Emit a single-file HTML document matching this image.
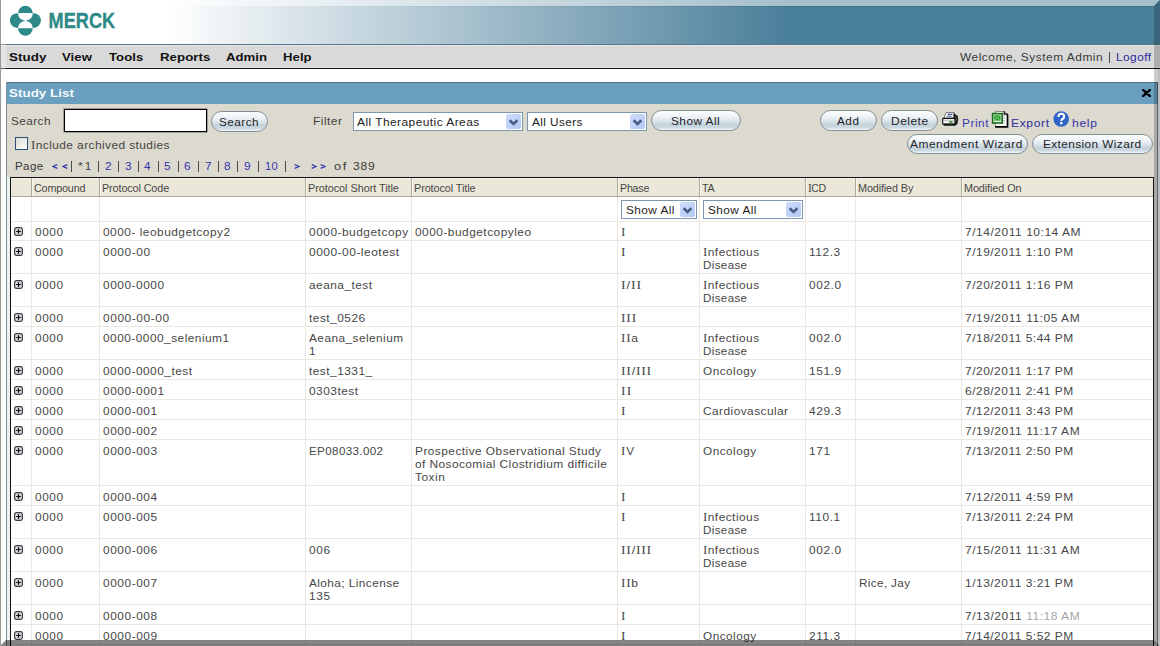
<!DOCTYPE html><html><head><meta charset="utf-8"><style>
html,body{margin:0;padding:0;}
body{width:1160px;height:646px;overflow:hidden;position:relative;background:#fff;font-family:"Liberation Sans",sans-serif;}
div{box-sizing:border-box;}
</style></head><body>
<div style="position:absolute;left:0px;top:0px;width:1160px;height:44px;background:linear-gradient(to right,#ffffff 0px,#ffffff 165px,#4a7f9a 790px,#4a7f9a 1160px);"></div>
<div style="position:absolute;left:0px;top:0px;width:1px;height:68px;background:#8a8a8a;"></div>
<svg style="position:absolute;left:0;top:0" width="130" height="44" viewBox="0 0 130 44">
<g fill="#2e8a88">
<circle cx="17.3" cy="20.6" r="7.4"/>
<circle cx="33.5" cy="20.6" r="7.4"/>
</g>
<path d="M18,13.2 A7.4,7.4 0 0 1 32.8,13.2 Z" fill="#2e8a88"/>
<path d="M18,13.2 A7.4,7.4 0 0 0 32.8,13.2 Z" fill="#ffffff"/>
<path d="M18,28.3 A7.4,7.4 0 0 1 32.8,28.3 Z" fill="#ffffff"/>
<path d="M18,28.3 A7.4,7.4 0 0 0 32.8,28.3 Z" fill="#2e8a88"/>
<text x="48.6" y="28.2" font-family="Liberation Sans" font-weight="bold" font-size="21.5" fill="#2e8a88" stroke="#2e8a88" stroke-width="0.35" textLength="66.5" lengthAdjust="spacingAndGlyphs">MERCK</text>
</svg>
<div style="position:absolute;left:1px;top:44px;width:1159px;height:1px;background:#5d7080;"></div>
<div style="position:absolute;left:1px;top:45px;width:1159px;height:23px;background:#d9d9d9;"></div>
<div style="position:absolute;left:1px;top:45px;width:1159px;height:1px;background:#e4eaee;"></div>
<div style="position:absolute;left:1px;top:67px;width:1159px;height:1px;background:#e6e6e6;"></div>
<div style="position:absolute;left:0px;top:68px;width:1160px;height:1px;background:#111111;"></div>
<div style="position:absolute;left:9.40px;top:51px;font-size:11px;line-height:13px;font-weight:bold;letter-spacing:0.044px;transform:scaleX(1.2142);transform-origin:0 0;color:#111;white-space:nowrap;">Study</div>
<div style="position:absolute;left:62.40px;top:51px;font-size:11px;line-height:13px;font-weight:bold;letter-spacing:0.055px;transform:scaleX(1.1968);transform-origin:0 0;color:#111;white-space:nowrap;">View</div>
<div style="position:absolute;left:108.60px;top:51px;font-size:11px;line-height:13px;font-weight:bold;letter-spacing:0.040px;transform:scaleX(1.1933);transform-origin:0 0;color:#111;white-space:nowrap;">Tools</div>
<div style="position:absolute;left:159.60px;top:51px;font-size:11px;line-height:13px;font-weight:bold;letter-spacing:0.028px;transform:scaleX(1.2054);transform-origin:0 0;color:#111;white-space:nowrap;">Reports</div>
<div style="position:absolute;left:225.80px;top:51px;font-size:11px;line-height:13px;font-weight:bold;letter-spacing:0.041px;transform:scaleX(1.1952);transform-origin:0 0;color:#111;white-space:nowrap;">Admin</div>
<div style="position:absolute;left:282.80px;top:51px;font-size:11px;line-height:13px;font-weight:bold;letter-spacing:0.054px;transform:scaleX(1.1914);transform-origin:0 0;color:#111;white-space:nowrap;">Help</div>
<div style="position:absolute;left:959.80px;top:51px;font-size:11px;line-height:13px;letter-spacing:0.478px;transform:scaleX(1.0836);transform-origin:0 0;color:#3a3a3a;white-space:nowrap;">Welcome, System Admin</div>
<div style="position:absolute;left:1109px;top:52px;width:1px;height:11px;background:#4a4a4a;"></div>
<div style="position:absolute;left:1115.80px;top:51px;font-size:11px;line-height:13px;letter-spacing:0.443px;transform:scaleX(1.0755);transform-origin:0 0;color:#2a2aa0;white-space:nowrap;">Logoff</div>
<div style="position:absolute;left:6px;top:82px;width:1152px;height:1px;background:#4f7389;"></div>
<div style="position:absolute;left:6px;top:82px;width:1px;height:570px;background:#7f8f99;"></div>
<div style="position:absolute;left:1157px;top:82px;width:1px;height:570px;background:#4f5f69;"></div>
<div style="position:absolute;left:7px;top:83px;width:1150px;height:21px;background:#6a9fc0;"></div>
<div style="position:absolute;left:7px;top:104px;width:1150px;height:540px;background:#dcd9cf;"></div>
<div style="position:absolute;left:9.30px;top:87px;font-size:11px;line-height:13px;font-weight:bold;letter-spacing:0.020px;transform:scaleX(1.2169);transform-origin:0 0;color:#f4faff;white-space:nowrap;">Study List</div>
<svg style="position:absolute;left:1142px;top:89px" width="9" height="8" viewBox="0 0 9 8"><path d="M1,0.8 L8,7.2 M8,0.8 L1,7.2" stroke="#000" stroke-width="2.3" stroke-linecap="round"/></svg>
<div style="position:absolute;left:10.80px;top:115px;font-size:11px;line-height:13px;letter-spacing:0.439px;transform:scaleX(1.0652);transform-origin:0 0;color:#444;white-space:nowrap;">Search</div>
<div style="position:absolute;left:64px;top:109px;width:143px;height:23px;border:1px solid #000;box-shadow:0 0 0 0.5px rgba(0,0,0,0.55);background:#fff;"></div>
<div style="position:absolute;left:211px;top:111px;width:57px;height:21px;border:1px solid #858e95;border-radius:10.5px;background:linear-gradient(to bottom,#fdfefe 0%,#eef3f6 30%,#dde6eb 50%,#c3d2db 72%,#cbd8e0 86%,#f4f7f9 100%);"></div>
<div style="position:absolute;left:219.10px;top:115.5px;font-size:11px;line-height:13px;letter-spacing:0.448px;transform:scaleX(1.0667);transform-origin:0 0;color:#1e1e2a;white-space:nowrap;">Search</div>
<div style="position:absolute;left:313.10px;top:115px;font-size:11px;line-height:13px;letter-spacing:0.416px;transform:scaleX(1.0891);transform-origin:0 0;color:#444;white-space:nowrap;">Filter</div>
<div style="position:absolute;left:353px;top:112px;width:170px;height:19px;border:1px solid #7b96ad;background:#fff;"></div>
<div style="position:absolute;left:506px;top:114px;width:15px;height:15px;border-radius:2px;background:linear-gradient(135deg,#d2dcfb 0%,#bdd0f8 60%,#b2c9f6 100%);"></div>
<svg style="position:absolute;left:506px;top:114px" width="15" height="15" viewBox="0 0 15 15"><path d="M3.6,6.2 L7.5,10 L11.4,6.2" fill="none" stroke="#4a5e84" stroke-width="2.6"/></svg>
<div style="position:absolute;left:357.30px;top:116px;font-size:11px;line-height:13px;letter-spacing:0.415px;transform:scaleX(1.0848);transform-origin:0 0;color:#222;white-space:nowrap;">All Therapeutic Areas</div>
<div style="position:absolute;left:527px;top:112px;width:120px;height:19px;border:1px solid #7b96ad;background:#fff;"></div>
<div style="position:absolute;left:630px;top:114px;width:15px;height:15px;border-radius:2px;background:linear-gradient(135deg,#d2dcfb 0%,#bdd0f8 60%,#b2c9f6 100%);"></div>
<svg style="position:absolute;left:630px;top:114px" width="15" height="15" viewBox="0 0 15 15"><path d="M3.6,6.2 L7.5,10 L11.4,6.2" fill="none" stroke="#4a5e84" stroke-width="2.6"/></svg>
<div style="position:absolute;left:531.50px;top:116px;font-size:11px;line-height:13px;letter-spacing:0.375px;transform:scaleX(1.0715);transform-origin:0 0;color:#222;white-space:nowrap;">All Users</div>
<div style="position:absolute;left:651px;top:110px;width:90px;height:21px;border:1px solid #858e95;border-radius:10.5px;background:linear-gradient(to bottom,#fdfefe 0%,#eef3f6 30%,#dde6eb 50%,#c3d2db 72%,#cbd8e0 86%,#f4f7f9 100%);"></div>
<div style="position:absolute;left:670.50px;top:114.5px;font-size:11px;line-height:13px;letter-spacing:0.435px;transform:scaleX(1.0748);transform-origin:0 0;color:#1e1e2a;white-space:nowrap;">Show All</div>
<div style="position:absolute;left:820px;top:110px;width:57px;height:21px;border:1px solid #858e95;border-radius:10.5px;background:linear-gradient(to bottom,#fdfefe 0%,#eef3f6 30%,#dde6eb 50%,#c3d2db 72%,#cbd8e0 86%,#f4f7f9 100%);"></div>
<div style="position:absolute;left:836.50px;top:114.5px;font-size:11px;line-height:13px;letter-spacing:0.554px;transform:scaleX(1.0569);transform-origin:0 0;color:#1e1e2a;white-space:nowrap;">Add</div>
<div style="position:absolute;left:881px;top:110px;width:57px;height:21px;border:1px solid #858e95;border-radius:10.5px;background:linear-gradient(to bottom,#fdfefe 0%,#eef3f6 30%,#dde6eb 50%,#c3d2db 72%,#cbd8e0 86%,#f4f7f9 100%);"></div>
<div style="position:absolute;left:890.60px;top:114.5px;font-size:11px;line-height:13px;letter-spacing:0.496px;transform:scaleX(1.0818);transform-origin:0 0;color:#1e1e2a;white-space:nowrap;">Delete</div>
<div style="position:absolute;left:907px;top:134px;width:121px;height:20px;border:1px solid #858e95;border-radius:10.0px;background:linear-gradient(to bottom,#fdfefe 0%,#eef3f6 30%,#dde6eb 50%,#c3d2db 72%,#cbd8e0 86%,#f4f7f9 100%);"></div>
<div style="position:absolute;left:910.20px;top:138.0px;font-size:11px;line-height:13px;letter-spacing:0.486px;transform:scaleX(1.0808);transform-origin:0 0;color:#1e1e2a;white-space:nowrap;">Amendment Wizard</div>
<div style="position:absolute;left:1032px;top:134px;width:121px;height:20px;border:1px solid #858e95;border-radius:10.0px;background:linear-gradient(to bottom,#fdfefe 0%,#eef3f6 30%,#dde6eb 50%,#c3d2db 72%,#cbd8e0 86%,#f4f7f9 100%);"></div>
<div style="position:absolute;left:1042.60px;top:138.0px;font-size:11px;line-height:13px;letter-spacing:0.390px;transform:scaleX(1.0725);transform-origin:0 0;color:#1e1e2a;white-space:nowrap;">Extension Wizard</div>
<svg style="position:absolute;left:942px;top:112px" width="17" height="15" viewBox="0 0 17 15">
<path d="M4.2,0.6 L12.4,0.6 L11.4,6.2 L1.8,6.2 Z" fill="#fafcff" stroke="#666" stroke-width="0.9"/>
<path d="M5.6,2.4 L10.4,2.4 M4.9,4.3 L9.6,4.3" stroke="#3b5a98" stroke-width="1.1"/>
<path d="M11.6,1 L13.6,2.4 L15.8,4 L16.2,7 L15.6,11.5 L13.8,13.6 L12,13.6 Z" fill="#1a1a1a"/>
<path d="M13.4,5.2 h1 M14.2,7.2 h1 M13.4,9.2 h1" stroke="#bbb" stroke-width="0.8"/>
<rect x="0.7" y="6.4" width="12.2" height="6" rx="0.8" fill="#f4f4f4" stroke="#111" stroke-width="1.1"/>
<path d="M1.2,8.3 L12.5,8.3" stroke="#999" stroke-width="0.6"/>
<rect x="7.2" y="9.1" width="3.4" height="1.6" fill="#2a8a2a"/>
<rect x="1.6" y="11.6" width="11.4" height="2.2" rx="0.8" fill="#111"/>
</svg>
<div style="position:absolute;left:962.00px;top:117px;font-size:11px;line-height:13px;letter-spacing:0.456px;transform:scaleX(1.0836);transform-origin:0 0;color:#3d38b0;white-space:nowrap;">Print</div>
<svg style="position:absolute;left:991px;top:110px" width="18" height="18" viewBox="0 0 18 18">
<path d="M4.5,1.5 L13.5,1.5 L16.5,4.5 L16.5,16.5 L4.5,16.5 Z" fill="#fbfffb" stroke="#8a8a8a" stroke-width="1"/>
<path d="M16.5,4.5 L16.5,16.8 L4.2,16.8" fill="none" stroke="#000" stroke-width="1.7"/>
<path d="M13.2,1.2 L13.2,4.2 L16.8,4.2" fill="none" stroke="#000" stroke-width="1.2"/>
<path d="M11.5,6 h2.5 M11.5,8.3 h2.5 M11.5,10.6 h2.5 M11.5,13 h2.5" stroke="#b0b0b0" stroke-width="1"/>
<rect x="1.6" y="3.6" width="9.6" height="9.4" fill="#d8f6d8" stroke="#1b6b1b" stroke-width="1.6"/>
<rect x="3.3" y="5.3" width="6.2" height="5.2" fill="#1d7d24"/>
<path d="M3.8,5.8 L9,10 M9,5.8 L3.8,10" stroke="#5fd05f" stroke-width="1.1"/>
</svg>
<div style="position:absolute;left:1011.30px;top:117px;font-size:11px;line-height:13px;letter-spacing:0.575px;transform:scaleX(1.0961);transform-origin:0 0;color:#302c98;white-space:nowrap;">Export</div>
<svg style="position:absolute;left:1053px;top:111px" width="17" height="16" viewBox="0 0 17 16">
<circle cx="8.2" cy="8" r="7.8" fill="#2f63c8"/>
<path d="M5.4,6 Q5.4,2.8 8.3,2.8 Q11.2,2.8 11.2,5.5 Q11.2,7.2 9.3,8 Q8.4,8.5 8.4,10" fill="none" stroke="#fff" stroke-width="2"/>
<rect x="7.2" y="11" width="2.3" height="2.3" fill="#fff"/>
</svg>
<div style="position:absolute;left:1072.10px;top:117px;font-size:11px;line-height:13px;letter-spacing:0.638px;transform:scaleX(1.0962);transform-origin:0 0;color:#3530a4;white-space:nowrap;">help</div>
<div style="position:absolute;left:15px;top:137px;width:13px;height:13px;border:1px solid #2a4f78;background:linear-gradient(135deg,#dcdcd6 0%,#f4f4f0 70%,#ffffff 100%);"></div>
<div style="position:absolute;left:31.00px;top:139px;font-size:11px;line-height:13px;letter-spacing:0.394px;transform:scaleX(1.0817);transform-origin:0 0;color:#444;white-space:nowrap;"><span style="font-family:'Liberation Serif',serif;font-size:12px">I</span>nclude archived studies</div>
<div style="position:absolute;left:15.00px;top:160px;font-size:11px;line-height:13px;letter-spacing:0.399px;transform:scaleX(1.0469);transform-origin:0 0;color:#3a3a3a;white-space:nowrap;">Page</div>
<svg style="position:absolute;left:52px;top:164px" width="6" height="5" viewBox="0 0 6 5"><path d="M5.3,0.6 L0.8,2.5 L5.3,4.4" fill="none" stroke="#3434b0" stroke-width="1.25"/></svg>
<svg style="position:absolute;left:61.5px;top:164px" width="6" height="5" viewBox="0 0 6 5"><path d="M5.3,0.6 L0.8,2.5 L5.3,4.4" fill="none" stroke="#3434b0" stroke-width="1.25"/></svg>
<div style="position:absolute;left:71px;top:161px;width:1px;height:11px;background:#4a4a4a;"></div>
<div style="position:absolute;left:98px;top:161px;width:1px;height:11px;background:#4a4a4a;"></div>
<div style="position:absolute;left:118px;top:161px;width:1px;height:11px;background:#4a4a4a;"></div>
<div style="position:absolute;left:138px;top:161px;width:1px;height:11px;background:#4a4a4a;"></div>
<div style="position:absolute;left:158px;top:161px;width:1px;height:11px;background:#4a4a4a;"></div>
<div style="position:absolute;left:178px;top:161px;width:1px;height:11px;background:#4a4a4a;"></div>
<div style="position:absolute;left:198px;top:161px;width:1px;height:11px;background:#4a4a4a;"></div>
<div style="position:absolute;left:218px;top:161px;width:1px;height:11px;background:#4a4a4a;"></div>
<div style="position:absolute;left:237px;top:161px;width:1px;height:11px;background:#4a4a4a;"></div>
<div style="position:absolute;left:258px;top:161px;width:1px;height:11px;background:#4a4a4a;"></div>
<div style="position:absolute;left:285px;top:161px;width:1px;height:11px;background:#4a4a4a;"></div>
<div style="position:absolute;left:77.80px;top:160px;font-size:11px;line-height:13px;letter-spacing:0.000px;transform:scaleX(1.2008);transform-origin:0 0;color:#3a3a3a;white-space:nowrap;font-size:10px;">*</div>
<div style="position:absolute;left:85.40px;top:160px;font-size:11px;line-height:13px;letter-spacing:0.000px;transform:scaleX(0.9904);transform-origin:0 0;color:#3a3a3a;white-space:nowrap;">1</div>
<div style="position:absolute;left:104.60px;top:160px;font-size:11px;line-height:13px;letter-spacing:0.000px;transform:scaleX(1.0721);transform-origin:0 0;color:#3434b0;white-space:nowrap;">2</div>
<div style="position:absolute;left:124.50px;top:160px;font-size:11px;line-height:13px;letter-spacing:0.000px;transform:scaleX(1.0721);transform-origin:0 0;color:#3434b0;white-space:nowrap;">3</div>
<div style="position:absolute;left:144.40px;top:160px;font-size:11px;line-height:13px;letter-spacing:0.000px;transform:scaleX(1.0721);transform-origin:0 0;color:#3434b0;white-space:nowrap;">4</div>
<div style="position:absolute;left:164.20px;top:160px;font-size:11px;line-height:13px;letter-spacing:0.000px;transform:scaleX(1.0721);transform-origin:0 0;color:#3434b0;white-space:nowrap;">5</div>
<div style="position:absolute;left:184.10px;top:160px;font-size:11px;line-height:13px;letter-spacing:0.000px;transform:scaleX(1.0721);transform-origin:0 0;color:#3434b0;white-space:nowrap;">6</div>
<div style="position:absolute;left:204.50px;top:160px;font-size:11px;line-height:13px;letter-spacing:0.000px;transform:scaleX(1.0721);transform-origin:0 0;color:#3434b0;white-space:nowrap;">7</div>
<div style="position:absolute;left:224.30px;top:160px;font-size:11px;line-height:13px;letter-spacing:0.000px;transform:scaleX(1.0721);transform-origin:0 0;color:#3434b0;white-space:nowrap;">8</div>
<div style="position:absolute;left:244.20px;top:160px;font-size:11px;line-height:13px;letter-spacing:0.000px;transform:scaleX(1.0721);transform-origin:0 0;color:#3434b0;white-space:nowrap;">9</div>
<div style="position:absolute;left:265.40px;top:160px;font-size:11px;line-height:13px;letter-spacing:0.247px;transform:scaleX(1.0190);transform-origin:0 0;color:#3434b0;white-space:nowrap;">10</div>
<svg style="position:absolute;left:294px;top:164px" width="6" height="5" viewBox="0 0 6 5"><path d="M0.7,0.6 L5.2,2.5 L0.7,4.4" fill="none" stroke="#3434b0" stroke-width="1.25"/></svg>
<svg style="position:absolute;left:310.5px;top:164px" width="6" height="5" viewBox="0 0 6 5"><path d="M0.7,0.6 L5.2,2.5 L0.7,4.4" fill="none" stroke="#3434b0" stroke-width="1.25"/></svg>
<svg style="position:absolute;left:319.5px;top:164px" width="6" height="5" viewBox="0 0 6 5"><path d="M0.7,0.6 L5.2,2.5 L0.7,4.4" fill="none" stroke="#3434b0" stroke-width="1.25"/></svg>
<div style="position:absolute;left:334.30px;top:160px;font-size:11px;line-height:13px;letter-spacing:1.440px;transform:scaleX(1.1649);transform-origin:0 0;color:#3a3a3a;white-space:nowrap;">of</div>
<div style="position:absolute;left:353.30px;top:160px;font-size:11px;line-height:13px;letter-spacing:0.809px;transform:scaleX(1.0912);transform-origin:0 0;color:#3a3a3a;white-space:nowrap;">389</div>
<div style="position:absolute;left:7px;top:177px;width:3px;height:470px;background:#eef1f2;"></div>
<div style="position:absolute;left:10px;top:177px;width:1144px;height:470px;background:#ffffff;"></div>
<div style="position:absolute;left:10px;top:178px;width:1143px;height:18px;background:#ebe8d9;"></div>
<div style="position:absolute;left:10px;top:178px;width:1143px;height:1px;background:#f7f6ee;"></div>
<div style="position:absolute;left:10px;top:177px;width:1144px;height:1px;background:#111111;"></div>
<div style="position:absolute;left:10px;top:196px;width:1143px;height:1px;background:#aca99a;"></div>
<div style="position:absolute;left:31px;top:178px;width:1px;height:18px;background:#aca99a;"></div>
<div style="position:absolute;left:32px;top:179px;width:1px;height:17px;background:#f8f7f0;"></div>
<div style="position:absolute;left:99px;top:178px;width:1px;height:18px;background:#aca99a;"></div>
<div style="position:absolute;left:100px;top:179px;width:1px;height:17px;background:#f8f7f0;"></div>
<div style="position:absolute;left:305px;top:178px;width:1px;height:18px;background:#aca99a;"></div>
<div style="position:absolute;left:306px;top:179px;width:1px;height:17px;background:#f8f7f0;"></div>
<div style="position:absolute;left:411px;top:178px;width:1px;height:18px;background:#aca99a;"></div>
<div style="position:absolute;left:412px;top:179px;width:1px;height:17px;background:#f8f7f0;"></div>
<div style="position:absolute;left:617px;top:178px;width:1px;height:18px;background:#aca99a;"></div>
<div style="position:absolute;left:618px;top:179px;width:1px;height:17px;background:#f8f7f0;"></div>
<div style="position:absolute;left:699px;top:178px;width:1px;height:18px;background:#aca99a;"></div>
<div style="position:absolute;left:700px;top:179px;width:1px;height:17px;background:#f8f7f0;"></div>
<div style="position:absolute;left:805px;top:178px;width:1px;height:18px;background:#aca99a;"></div>
<div style="position:absolute;left:806px;top:179px;width:1px;height:17px;background:#f8f7f0;"></div>
<div style="position:absolute;left:855px;top:178px;width:1px;height:18px;background:#aca99a;"></div>
<div style="position:absolute;left:856px;top:179px;width:1px;height:17px;background:#f8f7f0;"></div>
<div style="position:absolute;left:961px;top:178px;width:1px;height:18px;background:#aca99a;"></div>
<div style="position:absolute;left:962px;top:179px;width:1px;height:17px;background:#f8f7f0;"></div>
<div style="position:absolute;left:10px;top:177px;width:1px;height:470px;background:#111111;"></div>
<div style="position:absolute;left:1153px;top:177px;width:1px;height:470px;background:#111111;"></div>
<div style="position:absolute;left:33.50px;top:182px;font-size:11px;line-height:13px;letter-spacing:-0.172px;transform:scaleX(0.9785);transform-origin:0 0;color:#474747;white-space:nowrap;">Compound</div>
<div style="position:absolute;left:101.60px;top:182px;font-size:11px;line-height:13px;letter-spacing:-0.108px;transform:scaleX(0.9820);transform-origin:0 0;color:#474747;white-space:nowrap;">Protocol Code</div>
<div style="position:absolute;left:307.60px;top:182px;font-size:11px;line-height:13px;letter-spacing:-0.055px;transform:scaleX(0.9891);transform-origin:0 0;color:#474747;white-space:nowrap;">Protocol Short Title</div>
<div style="position:absolute;left:413.70px;top:182px;font-size:11px;line-height:13px;letter-spacing:-0.079px;transform:scaleX(0.9845);transform-origin:0 0;color:#474747;white-space:nowrap;">Protocol Title</div>
<div style="position:absolute;left:619.60px;top:182px;font-size:11px;line-height:13px;letter-spacing:-0.238px;transform:scaleX(0.9713);transform-origin:0 0;color:#474747;white-space:nowrap;">Phase</div>
<div style="position:absolute;left:701.80px;top:182px;font-size:11px;line-height:13px;letter-spacing:-0.360px;transform:scaleX(0.9767);transform-origin:0 0;color:#474747;white-space:nowrap;">TA</div>
<div style="position:absolute;left:807.90px;top:182px;font-size:11px;line-height:13px;letter-spacing:-0.519px;transform:scaleX(0.9526);transform-origin:0 0;color:#474747;white-space:nowrap;"><span style="font-family:'Liberation Serif',serif;font-size:12px">I</span>CD</div>
<div style="position:absolute;left:857.80px;top:182px;font-size:11px;line-height:13px;letter-spacing:-0.113px;transform:scaleX(0.9811);transform-origin:0 0;color:#474747;white-space:nowrap;">Modified By</div>
<div style="position:absolute;left:963.70px;top:182px;font-size:11px;line-height:13px;letter-spacing:-0.093px;transform:scaleX(0.9848);transform-origin:0 0;color:#474747;white-space:nowrap;">Modified On</div>
<div style="position:absolute;left:11px;top:221px;width:1142px;height:1px;background:#e9e8e1;"></div>
<div style="position:absolute;left:11px;top:240px;width:1142px;height:1px;background:#e9e8e1;"></div>
<div style="position:absolute;left:11px;top:273px;width:1142px;height:1px;background:#e9e8e1;"></div>
<div style="position:absolute;left:11px;top:306px;width:1142px;height:1px;background:#e9e8e1;"></div>
<div style="position:absolute;left:11px;top:326px;width:1142px;height:1px;background:#e9e8e1;"></div>
<div style="position:absolute;left:11px;top:359px;width:1142px;height:1px;background:#e9e8e1;"></div>
<div style="position:absolute;left:11px;top:379px;width:1142px;height:1px;background:#e9e8e1;"></div>
<div style="position:absolute;left:11px;top:399px;width:1142px;height:1px;background:#e9e8e1;"></div>
<div style="position:absolute;left:11px;top:419px;width:1142px;height:1px;background:#e9e8e1;"></div>
<div style="position:absolute;left:11px;top:439px;width:1142px;height:1px;background:#e9e8e1;"></div>
<div style="position:absolute;left:11px;top:485px;width:1142px;height:1px;background:#e9e8e1;"></div>
<div style="position:absolute;left:11px;top:505px;width:1142px;height:1px;background:#e9e8e1;"></div>
<div style="position:absolute;left:11px;top:538px;width:1142px;height:1px;background:#e9e8e1;"></div>
<div style="position:absolute;left:11px;top:571px;width:1142px;height:1px;background:#e9e8e1;"></div>
<div style="position:absolute;left:11px;top:604px;width:1142px;height:1px;background:#e9e8e1;"></div>
<div style="position:absolute;left:11px;top:624px;width:1142px;height:1px;background:#e9e8e1;"></div>
<div style="position:absolute;left:11px;top:644px;width:1142px;height:1px;background:#e9e8e1;"></div>
<div style="position:absolute;left:31px;top:197px;width:1px;height:450px;background:#e9e8e1;"></div>
<div style="position:absolute;left:99px;top:197px;width:1px;height:450px;background:#e9e8e1;"></div>
<div style="position:absolute;left:305px;top:197px;width:1px;height:450px;background:#e9e8e1;"></div>
<div style="position:absolute;left:411px;top:197px;width:1px;height:450px;background:#e9e8e1;"></div>
<div style="position:absolute;left:617px;top:197px;width:1px;height:450px;background:#e9e8e1;"></div>
<div style="position:absolute;left:699px;top:197px;width:1px;height:450px;background:#e9e8e1;"></div>
<div style="position:absolute;left:805px;top:197px;width:1px;height:450px;background:#e9e8e1;"></div>
<div style="position:absolute;left:855px;top:197px;width:1px;height:450px;background:#e9e8e1;"></div>
<div style="position:absolute;left:961px;top:197px;width:1px;height:450px;background:#e9e8e1;"></div>
<div style="position:absolute;left:621px;top:200px;width:76px;height:19px;border:1px solid #7b96ad;background:#fff;"></div>
<div style="position:absolute;left:680px;top:202px;width:15px;height:15px;border-radius:2px;background:linear-gradient(135deg,#d2dcfb 0%,#bdd0f8 60%,#b2c9f6 100%);"></div>
<svg style="position:absolute;left:680px;top:202px" width="15" height="15" viewBox="0 0 15 15"><path d="M3.6,6.2 L7.5,10 L11.4,6.2" fill="none" stroke="#4a5e84" stroke-width="2.6"/></svg>
<div style="position:absolute;left:625.60px;top:204px;font-size:11px;line-height:13px;letter-spacing:0.423px;transform:scaleX(1.0725);transform-origin:0 0;color:#222;white-space:nowrap;">Show All</div>
<div style="position:absolute;left:703px;top:200px;width:100px;height:19px;border:1px solid #7b96ad;background:#fff;"></div>
<div style="position:absolute;left:786px;top:202px;width:15px;height:15px;border-radius:2px;background:linear-gradient(135deg,#d2dcfb 0%,#bdd0f8 60%,#b2c9f6 100%);"></div>
<svg style="position:absolute;left:786px;top:202px" width="15" height="15" viewBox="0 0 15 15"><path d="M3.6,6.2 L7.5,10 L11.4,6.2" fill="none" stroke="#4a5e84" stroke-width="2.6"/></svg>
<div style="position:absolute;left:707.60px;top:204px;font-size:11px;line-height:13px;letter-spacing:0.423px;transform:scaleX(1.0725);transform-origin:0 0;color:#222;white-space:nowrap;">Show All</div>
<svg style="position:absolute;left:14px;top:227px" width="9" height="9" viewBox="0 0 9 9"><rect x="0.6" y="0.6" width="7.8" height="7.8" rx="1.8" fill="#d4d9de" stroke="#3c3c3c" stroke-width="1.2"/><path d="M2.2,4.5 L6.8,4.5 M4.5,2.2 L4.5,6.8" stroke="#000" stroke-width="1.2"/></svg>
<div style="position:absolute;left:35.40px;top:226px;font-size:11px;line-height:13px;letter-spacing:0.571px;transform:scaleX(1.0721);transform-origin:0 0;color:#474747;white-space:nowrap;">0000</div>
<div style="position:absolute;left:103.40px;top:226px;font-size:11px;line-height:13px;letter-spacing:0.445px;transform:scaleX(1.0833);transform-origin:0 0;color:#474747;white-space:nowrap;">0000- leobudgetcopy2</div>
<div style="position:absolute;left:309.40px;top:226px;font-size:11px;line-height:13px;letter-spacing:0.467px;transform:scaleX(1.0823);transform-origin:0 0;color:#474747;white-space:nowrap;">0000-budgetcopy</div>
<div style="position:absolute;left:415.40px;top:226px;font-size:11px;line-height:13px;letter-spacing:0.448px;transform:scaleX(1.0818);transform-origin:0 0;color:#474747;white-space:nowrap;">0000-budgetcopyleo</div>
<div style="position:absolute;left:621.40px;top:226px;font-size:11px;line-height:13px;letter-spacing:0.000px;transform:scaleX(1.1256);transform-origin:0 0;color:#474747;white-space:nowrap;"><span style="font-family:'Liberation Serif',serif;font-size:12px">I</span></div>
<div style="position:absolute;left:965.40px;top:226px;font-size:11px;line-height:13px;letter-spacing:0.488px;transform:scaleX(1.0905);transform-origin:0 0;color:#474747;white-space:nowrap;">7/14/2011 10:14 AM</div>
<svg style="position:absolute;left:14px;top:247px" width="9" height="9" viewBox="0 0 9 9"><rect x="0.6" y="0.6" width="7.8" height="7.8" rx="1.8" fill="#d4d9de" stroke="#3c3c3c" stroke-width="1.2"/><path d="M2.2,4.5 L6.8,4.5 M4.5,2.2 L4.5,6.8" stroke="#000" stroke-width="1.2"/></svg>
<div style="position:absolute;left:35.40px;top:246px;font-size:11px;line-height:13px;letter-spacing:0.571px;transform:scaleX(1.0721);transform-origin:0 0;color:#474747;white-space:nowrap;">0000</div>
<div style="position:absolute;left:103.40px;top:246px;font-size:11px;line-height:13px;letter-spacing:0.523px;transform:scaleX(1.0821);transform-origin:0 0;color:#474747;white-space:nowrap;">0000-00</div>
<div style="position:absolute;left:309.40px;top:246px;font-size:11px;line-height:13px;letter-spacing:0.451px;transform:scaleX(1.0887);transform-origin:0 0;color:#474747;white-space:nowrap;">0000-00-leotest</div>
<div style="position:absolute;left:621.40px;top:246px;font-size:11px;line-height:13px;letter-spacing:0.000px;transform:scaleX(1.1256);transform-origin:0 0;color:#474747;white-space:nowrap;"><span style="font-family:'Liberation Serif',serif;font-size:12px">I</span></div>
<div style="position:absolute;left:703.40px;top:246px;font-size:11px;line-height:13px;letter-spacing:0.418px;transform:scaleX(1.0831);transform-origin:0 0;color:#474747;white-space:nowrap;"><span style="font-family:'Liberation Serif',serif;font-size:12px">I</span>nfectious</div>
<div style="position:absolute;left:703.40px;top:259px;font-size:11px;line-height:13px;letter-spacing:0.345px;transform:scaleX(1.0536);transform-origin:0 0;color:#474747;white-space:nowrap;">Disease</div>
<div style="position:absolute;left:809.40px;top:246px;font-size:11px;line-height:13px;letter-spacing:0.536px;transform:scaleX(1.0813);transform-origin:0 0;color:#474747;white-space:nowrap;">112.3</div>
<div style="position:absolute;left:965.40px;top:246px;font-size:11px;line-height:13px;letter-spacing:0.466px;transform:scaleX(1.0863);transform-origin:0 0;color:#474747;white-space:nowrap;">7/19/2011 1:10 PM</div>
<svg style="position:absolute;left:14px;top:280px" width="9" height="9" viewBox="0 0 9 9"><rect x="0.6" y="0.6" width="7.8" height="7.8" rx="1.8" fill="#d4d9de" stroke="#3c3c3c" stroke-width="1.2"/><path d="M2.2,4.5 L6.8,4.5 M4.5,2.2 L4.5,6.8" stroke="#000" stroke-width="1.2"/></svg>
<div style="position:absolute;left:35.40px;top:279px;font-size:11px;line-height:13px;letter-spacing:0.571px;transform:scaleX(1.0721);transform-origin:0 0;color:#474747;white-space:nowrap;">0000</div>
<div style="position:absolute;left:103.40px;top:279px;font-size:11px;line-height:13px;letter-spacing:0.495px;transform:scaleX(1.0798);transform-origin:0 0;color:#474747;white-space:nowrap;">0000-0000</div>
<div style="position:absolute;left:309.40px;top:279px;font-size:11px;line-height:13px;letter-spacing:0.449px;transform:scaleX(1.0787);transform-origin:0 0;color:#474747;white-space:nowrap;">aeana_test</div>
<div style="position:absolute;left:621.40px;top:279px;font-size:11px;line-height:13px;letter-spacing:0.756px;transform:scaleX(1.1647);transform-origin:0 0;color:#474747;white-space:nowrap;"><span style="font-family:'Liberation Serif',serif;font-size:12px">I</span>/<span style="font-family:'Liberation Serif',serif;font-size:12px">I</span><span style="font-family:'Liberation Serif',serif;font-size:12px">I</span></div>
<div style="position:absolute;left:703.40px;top:279px;font-size:11px;line-height:13px;letter-spacing:0.418px;transform:scaleX(1.0831);transform-origin:0 0;color:#474747;white-space:nowrap;"><span style="font-family:'Liberation Serif',serif;font-size:12px">I</span>nfectious</div>
<div style="position:absolute;left:703.40px;top:292px;font-size:11px;line-height:13px;letter-spacing:0.345px;transform:scaleX(1.0536);transform-origin:0 0;color:#474747;white-space:nowrap;">Disease</div>
<div style="position:absolute;left:809.40px;top:279px;font-size:11px;line-height:13px;letter-spacing:0.536px;transform:scaleX(1.0813);transform-origin:0 0;color:#474747;white-space:nowrap;">002.0</div>
<div style="position:absolute;left:965.40px;top:279px;font-size:11px;line-height:13px;letter-spacing:0.466px;transform:scaleX(1.0863);transform-origin:0 0;color:#474747;white-space:nowrap;">7/20/2011 1:16 PM</div>
<svg style="position:absolute;left:14px;top:313px" width="9" height="9" viewBox="0 0 9 9"><rect x="0.6" y="0.6" width="7.8" height="7.8" rx="1.8" fill="#d4d9de" stroke="#3c3c3c" stroke-width="1.2"/><path d="M2.2,4.5 L6.8,4.5 M4.5,2.2 L4.5,6.8" stroke="#000" stroke-width="1.2"/></svg>
<div style="position:absolute;left:35.40px;top:312px;font-size:11px;line-height:13px;letter-spacing:0.571px;transform:scaleX(1.0721);transform-origin:0 0;color:#474747;white-space:nowrap;">0000</div>
<div style="position:absolute;left:103.40px;top:312px;font-size:11px;line-height:13px;letter-spacing:0.506px;transform:scaleX(1.0865);transform-origin:0 0;color:#474747;white-space:nowrap;">0000-00-00</div>
<div style="position:absolute;left:309.40px;top:312px;font-size:11px;line-height:13px;letter-spacing:0.454px;transform:scaleX(1.0795);transform-origin:0 0;color:#474747;white-space:nowrap;">test_0526</div>
<div style="position:absolute;left:621.40px;top:312px;font-size:11px;line-height:13px;letter-spacing:0.725px;transform:scaleX(1.1256);transform-origin:0 0;color:#474747;white-space:nowrap;"><span style="font-family:'Liberation Serif',serif;font-size:12px">I</span><span style="font-family:'Liberation Serif',serif;font-size:12px">I</span><span style="font-family:'Liberation Serif',serif;font-size:12px">I</span></div>
<div style="position:absolute;left:965.40px;top:312px;font-size:11px;line-height:13px;letter-spacing:0.488px;transform:scaleX(1.0905);transform-origin:0 0;color:#474747;white-space:nowrap;">7/19/2011 11:05 AM</div>
<svg style="position:absolute;left:14px;top:333px" width="9" height="9" viewBox="0 0 9 9"><rect x="0.6" y="0.6" width="7.8" height="7.8" rx="1.8" fill="#d4d9de" stroke="#3c3c3c" stroke-width="1.2"/><path d="M2.2,4.5 L6.8,4.5 M4.5,2.2 L4.5,6.8" stroke="#000" stroke-width="1.2"/></svg>
<div style="position:absolute;left:35.40px;top:332px;font-size:11px;line-height:13px;letter-spacing:0.571px;transform:scaleX(1.0721);transform-origin:0 0;color:#474747;white-space:nowrap;">0000</div>
<div style="position:absolute;left:103.40px;top:332px;font-size:11px;line-height:13px;letter-spacing:0.445px;transform:scaleX(1.0787);transform-origin:0 0;color:#474747;white-space:nowrap;">0000-0000_selenium1</div>
<div style="position:absolute;left:309.40px;top:332px;font-size:11px;line-height:13px;letter-spacing:0.437px;transform:scaleX(1.0735);transform-origin:0 0;color:#474747;white-space:nowrap;">Aeana_selenium</div>
<div style="position:absolute;left:309.40px;top:345px;font-size:11px;line-height:13px;letter-spacing:0.000px;transform:scaleX(1.0721);transform-origin:0 0;color:#474747;white-space:nowrap;">1</div>
<div style="position:absolute;left:621.40px;top:332px;font-size:11px;line-height:13px;letter-spacing:0.702px;transform:scaleX(1.1024);transform-origin:0 0;color:#474747;white-space:nowrap;"><span style="font-family:'Liberation Serif',serif;font-size:12px">I</span><span style="font-family:'Liberation Serif',serif;font-size:12px">I</span>a</div>
<div style="position:absolute;left:703.40px;top:332px;font-size:11px;line-height:13px;letter-spacing:0.418px;transform:scaleX(1.0831);transform-origin:0 0;color:#474747;white-space:nowrap;"><span style="font-family:'Liberation Serif',serif;font-size:12px">I</span>nfectious</div>
<div style="position:absolute;left:703.40px;top:345px;font-size:11px;line-height:13px;letter-spacing:0.345px;transform:scaleX(1.0536);transform-origin:0 0;color:#474747;white-space:nowrap;">Disease</div>
<div style="position:absolute;left:809.40px;top:332px;font-size:11px;line-height:13px;letter-spacing:0.536px;transform:scaleX(1.0813);transform-origin:0 0;color:#474747;white-space:nowrap;">002.0</div>
<div style="position:absolute;left:965.40px;top:332px;font-size:11px;line-height:13px;letter-spacing:0.466px;transform:scaleX(1.0863);transform-origin:0 0;color:#474747;white-space:nowrap;">7/18/2011 5:44 PM</div>
<svg style="position:absolute;left:14px;top:366px" width="9" height="9" viewBox="0 0 9 9"><rect x="0.6" y="0.6" width="7.8" height="7.8" rx="1.8" fill="#d4d9de" stroke="#3c3c3c" stroke-width="1.2"/><path d="M2.2,4.5 L6.8,4.5 M4.5,2.2 L4.5,6.8" stroke="#000" stroke-width="1.2"/></svg>
<div style="position:absolute;left:35.40px;top:365px;font-size:11px;line-height:13px;letter-spacing:0.571px;transform:scaleX(1.0721);transform-origin:0 0;color:#474747;white-space:nowrap;">0000</div>
<div style="position:absolute;left:103.40px;top:365px;font-size:11px;line-height:13px;letter-spacing:0.452px;transform:scaleX(1.0821);transform-origin:0 0;color:#474747;white-space:nowrap;">0000-0000_test</div>
<div style="position:absolute;left:309.40px;top:365px;font-size:11px;line-height:13px;letter-spacing:0.449px;transform:scaleX(1.0787);transform-origin:0 0;color:#474747;white-space:nowrap;">test_1331_</div>
<div style="position:absolute;left:621.40px;top:365px;font-size:11px;line-height:13px;letter-spacing:0.631px;transform:scaleX(1.1511);transform-origin:0 0;color:#474747;white-space:nowrap;"><span style="font-family:'Liberation Serif',serif;font-size:12px">I</span><span style="font-family:'Liberation Serif',serif;font-size:12px">I</span>/<span style="font-family:'Liberation Serif',serif;font-size:12px">I</span><span style="font-family:'Liberation Serif',serif;font-size:12px">I</span><span style="font-family:'Liberation Serif',serif;font-size:12px">I</span></div>
<div style="position:absolute;left:703.40px;top:365px;font-size:11px;line-height:13px;letter-spacing:0.445px;transform:scaleX(1.0703);transform-origin:0 0;color:#474747;white-space:nowrap;">Oncology</div>
<div style="position:absolute;left:809.40px;top:365px;font-size:11px;line-height:13px;letter-spacing:0.536px;transform:scaleX(1.0813);transform-origin:0 0;color:#474747;white-space:nowrap;">151.9</div>
<div style="position:absolute;left:965.40px;top:365px;font-size:11px;line-height:13px;letter-spacing:0.466px;transform:scaleX(1.0863);transform-origin:0 0;color:#474747;white-space:nowrap;">7/20/2011 1:17 PM</div>
<svg style="position:absolute;left:14px;top:386px" width="9" height="9" viewBox="0 0 9 9"><rect x="0.6" y="0.6" width="7.8" height="7.8" rx="1.8" fill="#d4d9de" stroke="#3c3c3c" stroke-width="1.2"/><path d="M2.2,4.5 L6.8,4.5 M4.5,2.2 L4.5,6.8" stroke="#000" stroke-width="1.2"/></svg>
<div style="position:absolute;left:35.40px;top:385px;font-size:11px;line-height:13px;letter-spacing:0.571px;transform:scaleX(1.0721);transform-origin:0 0;color:#474747;white-space:nowrap;">0000</div>
<div style="position:absolute;left:103.40px;top:385px;font-size:11px;line-height:13px;letter-spacing:0.495px;transform:scaleX(1.0798);transform-origin:0 0;color:#474747;white-space:nowrap;">0000-0001</div>
<div style="position:absolute;left:309.40px;top:385px;font-size:11px;line-height:13px;letter-spacing:0.460px;transform:scaleX(1.0806);transform-origin:0 0;color:#474747;white-space:nowrap;">0303test</div>
<div style="position:absolute;left:621.40px;top:385px;font-size:11px;line-height:13px;letter-spacing:1.003px;transform:scaleX(1.1256);transform-origin:0 0;color:#474747;white-space:nowrap;"><span style="font-family:'Liberation Serif',serif;font-size:12px">I</span><span style="font-family:'Liberation Serif',serif;font-size:12px">I</span></div>
<div style="position:absolute;left:965.40px;top:385px;font-size:11px;line-height:13px;letter-spacing:0.466px;transform:scaleX(1.0863);transform-origin:0 0;color:#474747;white-space:nowrap;">6/28/2011 2:41 PM</div>
<svg style="position:absolute;left:14px;top:406px" width="9" height="9" viewBox="0 0 9 9"><rect x="0.6" y="0.6" width="7.8" height="7.8" rx="1.8" fill="#d4d9de" stroke="#3c3c3c" stroke-width="1.2"/><path d="M2.2,4.5 L6.8,4.5 M4.5,2.2 L4.5,6.8" stroke="#000" stroke-width="1.2"/></svg>
<div style="position:absolute;left:35.40px;top:405px;font-size:11px;line-height:13px;letter-spacing:0.571px;transform:scaleX(1.0721);transform-origin:0 0;color:#474747;white-space:nowrap;">0000</div>
<div style="position:absolute;left:103.40px;top:405px;font-size:11px;line-height:13px;letter-spacing:0.507px;transform:scaleX(1.0808);transform-origin:0 0;color:#474747;white-space:nowrap;">0000-001</div>
<div style="position:absolute;left:621.40px;top:405px;font-size:11px;line-height:13px;letter-spacing:0.000px;transform:scaleX(1.1256);transform-origin:0 0;color:#474747;white-space:nowrap;"><span style="font-family:'Liberation Serif',serif;font-size:12px">I</span></div>
<div style="position:absolute;left:703.40px;top:405px;font-size:11px;line-height:13px;letter-spacing:0.420px;transform:scaleX(1.0793);transform-origin:0 0;color:#474747;white-space:nowrap;">Cardiovascular</div>
<div style="position:absolute;left:809.40px;top:405px;font-size:11px;line-height:13px;letter-spacing:0.536px;transform:scaleX(1.0813);transform-origin:0 0;color:#474747;white-space:nowrap;">429.3</div>
<div style="position:absolute;left:965.40px;top:405px;font-size:11px;line-height:13px;letter-spacing:0.466px;transform:scaleX(1.0863);transform-origin:0 0;color:#474747;white-space:nowrap;">7/12/2011 3:43 PM</div>
<svg style="position:absolute;left:14px;top:426px" width="9" height="9" viewBox="0 0 9 9"><rect x="0.6" y="0.6" width="7.8" height="7.8" rx="1.8" fill="#d4d9de" stroke="#3c3c3c" stroke-width="1.2"/><path d="M2.2,4.5 L6.8,4.5 M4.5,2.2 L4.5,6.8" stroke="#000" stroke-width="1.2"/></svg>
<div style="position:absolute;left:35.40px;top:425px;font-size:11px;line-height:13px;letter-spacing:0.571px;transform:scaleX(1.0721);transform-origin:0 0;color:#474747;white-space:nowrap;">0000</div>
<div style="position:absolute;left:103.40px;top:425px;font-size:11px;line-height:13px;letter-spacing:0.507px;transform:scaleX(1.0808);transform-origin:0 0;color:#474747;white-space:nowrap;">0000-002</div>
<div style="position:absolute;left:965.40px;top:425px;font-size:11px;line-height:13px;letter-spacing:0.488px;transform:scaleX(1.0905);transform-origin:0 0;color:#474747;white-space:nowrap;">7/19/2011 11:17 AM</div>
<svg style="position:absolute;left:14px;top:446px" width="9" height="9" viewBox="0 0 9 9"><rect x="0.6" y="0.6" width="7.8" height="7.8" rx="1.8" fill="#d4d9de" stroke="#3c3c3c" stroke-width="1.2"/><path d="M2.2,4.5 L6.8,4.5 M4.5,2.2 L4.5,6.8" stroke="#000" stroke-width="1.2"/></svg>
<div style="position:absolute;left:35.40px;top:445px;font-size:11px;line-height:13px;letter-spacing:0.571px;transform:scaleX(1.0721);transform-origin:0 0;color:#474747;white-space:nowrap;">0000</div>
<div style="position:absolute;left:103.40px;top:445px;font-size:11px;line-height:13px;letter-spacing:0.507px;transform:scaleX(1.0808);transform-origin:0 0;color:#474747;white-space:nowrap;">0000-003</div>
<div style="position:absolute;left:309.40px;top:445px;font-size:11px;line-height:13px;letter-spacing:0.353px;transform:scaleX(1.0550);transform-origin:0 0;color:#474747;white-space:nowrap;">EP08033.002</div>
<div style="position:absolute;left:415.40px;top:445px;font-size:11px;line-height:13px;letter-spacing:0.409px;transform:scaleX(1.0828);transform-origin:0 0;color:#474747;white-space:nowrap;">Prospective Observational Study</div>
<div style="position:absolute;left:415.40px;top:458px;font-size:11px;line-height:13px;letter-spacing:0.376px;transform:scaleX(1.0838);transform-origin:0 0;color:#474747;white-space:nowrap;">of Nosocomial Clostridium difficile</div>
<div style="position:absolute;left:415.40px;top:471px;font-size:11px;line-height:13px;letter-spacing:0.494px;transform:scaleX(1.0762);transform-origin:0 0;color:#474747;white-space:nowrap;">Toxin</div>
<div style="position:absolute;left:621.40px;top:445px;font-size:11px;line-height:13px;letter-spacing:0.845px;transform:scaleX(1.0735);transform-origin:0 0;color:#474747;white-space:nowrap;"><span style="font-family:'Liberation Serif',serif;font-size:12px">I</span>V</div>
<div style="position:absolute;left:703.40px;top:445px;font-size:11px;line-height:13px;letter-spacing:0.445px;transform:scaleX(1.0703);transform-origin:0 0;color:#474747;white-space:nowrap;">Oncology</div>
<div style="position:absolute;left:809.40px;top:445px;font-size:11px;line-height:13px;letter-spacing:0.651px;transform:scaleX(1.0721);transform-origin:0 0;color:#474747;white-space:nowrap;">171</div>
<div style="position:absolute;left:965.40px;top:445px;font-size:11px;line-height:13px;letter-spacing:0.466px;transform:scaleX(1.0863);transform-origin:0 0;color:#474747;white-space:nowrap;">7/13/2011 2:50 PM</div>
<svg style="position:absolute;left:14px;top:492px" width="9" height="9" viewBox="0 0 9 9"><rect x="0.6" y="0.6" width="7.8" height="7.8" rx="1.8" fill="#d4d9de" stroke="#3c3c3c" stroke-width="1.2"/><path d="M2.2,4.5 L6.8,4.5 M4.5,2.2 L4.5,6.8" stroke="#000" stroke-width="1.2"/></svg>
<div style="position:absolute;left:35.40px;top:491px;font-size:11px;line-height:13px;letter-spacing:0.571px;transform:scaleX(1.0721);transform-origin:0 0;color:#474747;white-space:nowrap;">0000</div>
<div style="position:absolute;left:103.40px;top:491px;font-size:11px;line-height:13px;letter-spacing:0.507px;transform:scaleX(1.0808);transform-origin:0 0;color:#474747;white-space:nowrap;">0000-004</div>
<div style="position:absolute;left:621.40px;top:491px;font-size:11px;line-height:13px;letter-spacing:0.000px;transform:scaleX(1.1256);transform-origin:0 0;color:#474747;white-space:nowrap;"><span style="font-family:'Liberation Serif',serif;font-size:12px">I</span></div>
<div style="position:absolute;left:965.40px;top:491px;font-size:11px;line-height:13px;letter-spacing:0.466px;transform:scaleX(1.0863);transform-origin:0 0;color:#474747;white-space:nowrap;">7/12/2011 4:59 PM</div>
<svg style="position:absolute;left:14px;top:512px" width="9" height="9" viewBox="0 0 9 9"><rect x="0.6" y="0.6" width="7.8" height="7.8" rx="1.8" fill="#d4d9de" stroke="#3c3c3c" stroke-width="1.2"/><path d="M2.2,4.5 L6.8,4.5 M4.5,2.2 L4.5,6.8" stroke="#000" stroke-width="1.2"/></svg>
<div style="position:absolute;left:35.40px;top:511px;font-size:11px;line-height:13px;letter-spacing:0.571px;transform:scaleX(1.0721);transform-origin:0 0;color:#474747;white-space:nowrap;">0000</div>
<div style="position:absolute;left:103.40px;top:511px;font-size:11px;line-height:13px;letter-spacing:0.507px;transform:scaleX(1.0808);transform-origin:0 0;color:#474747;white-space:nowrap;">0000-005</div>
<div style="position:absolute;left:621.40px;top:511px;font-size:11px;line-height:13px;letter-spacing:0.000px;transform:scaleX(1.1256);transform-origin:0 0;color:#474747;white-space:nowrap;"><span style="font-family:'Liberation Serif',serif;font-size:12px">I</span></div>
<div style="position:absolute;left:703.40px;top:511px;font-size:11px;line-height:13px;letter-spacing:0.418px;transform:scaleX(1.0831);transform-origin:0 0;color:#474747;white-space:nowrap;"><span style="font-family:'Liberation Serif',serif;font-size:12px">I</span>nfectious</div>
<div style="position:absolute;left:703.40px;top:524px;font-size:11px;line-height:13px;letter-spacing:0.345px;transform:scaleX(1.0536);transform-origin:0 0;color:#474747;white-space:nowrap;">Disease</div>
<div style="position:absolute;left:809.40px;top:511px;font-size:11px;line-height:13px;letter-spacing:0.536px;transform:scaleX(1.0813);transform-origin:0 0;color:#474747;white-space:nowrap;">110.1</div>
<div style="position:absolute;left:965.40px;top:511px;font-size:11px;line-height:13px;letter-spacing:0.466px;transform:scaleX(1.0863);transform-origin:0 0;color:#474747;white-space:nowrap;">7/13/2011 2:24 PM</div>
<svg style="position:absolute;left:14px;top:545px" width="9" height="9" viewBox="0 0 9 9"><rect x="0.6" y="0.6" width="7.8" height="7.8" rx="1.8" fill="#d4d9de" stroke="#3c3c3c" stroke-width="1.2"/><path d="M2.2,4.5 L6.8,4.5 M4.5,2.2 L4.5,6.8" stroke="#000" stroke-width="1.2"/></svg>
<div style="position:absolute;left:35.40px;top:544px;font-size:11px;line-height:13px;letter-spacing:0.571px;transform:scaleX(1.0721);transform-origin:0 0;color:#474747;white-space:nowrap;">0000</div>
<div style="position:absolute;left:103.40px;top:544px;font-size:11px;line-height:13px;letter-spacing:0.507px;transform:scaleX(1.0808);transform-origin:0 0;color:#474747;white-space:nowrap;">0000-006</div>
<div style="position:absolute;left:309.40px;top:544px;font-size:11px;line-height:13px;letter-spacing:0.651px;transform:scaleX(1.0721);transform-origin:0 0;color:#474747;white-space:nowrap;">006</div>
<div style="position:absolute;left:621.40px;top:544px;font-size:11px;line-height:13px;letter-spacing:0.631px;transform:scaleX(1.1511);transform-origin:0 0;color:#474747;white-space:nowrap;"><span style="font-family:'Liberation Serif',serif;font-size:12px">I</span><span style="font-family:'Liberation Serif',serif;font-size:12px">I</span>/<span style="font-family:'Liberation Serif',serif;font-size:12px">I</span><span style="font-family:'Liberation Serif',serif;font-size:12px">I</span><span style="font-family:'Liberation Serif',serif;font-size:12px">I</span></div>
<div style="position:absolute;left:703.40px;top:544px;font-size:11px;line-height:13px;letter-spacing:0.418px;transform:scaleX(1.0831);transform-origin:0 0;color:#474747;white-space:nowrap;"><span style="font-family:'Liberation Serif',serif;font-size:12px">I</span>nfectious</div>
<div style="position:absolute;left:703.40px;top:557px;font-size:11px;line-height:13px;letter-spacing:0.345px;transform:scaleX(1.0536);transform-origin:0 0;color:#474747;white-space:nowrap;">Disease</div>
<div style="position:absolute;left:809.40px;top:544px;font-size:11px;line-height:13px;letter-spacing:0.536px;transform:scaleX(1.0813);transform-origin:0 0;color:#474747;white-space:nowrap;">002.0</div>
<div style="position:absolute;left:965.40px;top:544px;font-size:11px;line-height:13px;letter-spacing:0.488px;transform:scaleX(1.0905);transform-origin:0 0;color:#474747;white-space:nowrap;">7/15/2011 11:31 AM</div>
<svg style="position:absolute;left:14px;top:578px" width="9" height="9" viewBox="0 0 9 9"><rect x="0.6" y="0.6" width="7.8" height="7.8" rx="1.8" fill="#d4d9de" stroke="#3c3c3c" stroke-width="1.2"/><path d="M2.2,4.5 L6.8,4.5 M4.5,2.2 L4.5,6.8" stroke="#000" stroke-width="1.2"/></svg>
<div style="position:absolute;left:35.40px;top:577px;font-size:11px;line-height:13px;letter-spacing:0.571px;transform:scaleX(1.0721);transform-origin:0 0;color:#474747;white-space:nowrap;">0000</div>
<div style="position:absolute;left:103.40px;top:577px;font-size:11px;line-height:13px;letter-spacing:0.507px;transform:scaleX(1.0808);transform-origin:0 0;color:#474747;white-space:nowrap;">0000-007</div>
<div style="position:absolute;left:309.40px;top:577px;font-size:11px;line-height:13px;letter-spacing:0.394px;transform:scaleX(1.0749);transform-origin:0 0;color:#474747;white-space:nowrap;">Aloha; Lincense</div>
<div style="position:absolute;left:309.40px;top:590px;font-size:11px;line-height:13px;letter-spacing:0.651px;transform:scaleX(1.0721);transform-origin:0 0;color:#474747;white-space:nowrap;">135</div>
<div style="position:absolute;left:621.40px;top:577px;font-size:11px;line-height:13px;letter-spacing:0.702px;transform:scaleX(1.1024);transform-origin:0 0;color:#474747;white-space:nowrap;"><span style="font-family:'Liberation Serif',serif;font-size:12px">I</span><span style="font-family:'Liberation Serif',serif;font-size:12px">I</span>b</div>
<div style="position:absolute;left:859.40px;top:577px;font-size:11px;line-height:13px;letter-spacing:0.346px;transform:scaleX(1.0637);transform-origin:0 0;color:#474747;white-space:nowrap;">Rice, Jay</div>
<div style="position:absolute;left:965.40px;top:577px;font-size:11px;line-height:13px;letter-spacing:0.466px;transform:scaleX(1.0863);transform-origin:0 0;color:#474747;white-space:nowrap;">1/13/2011 3:21 PM</div>
<svg style="position:absolute;left:14px;top:611px" width="9" height="9" viewBox="0 0 9 9"><rect x="0.6" y="0.6" width="7.8" height="7.8" rx="1.8" fill="#d4d9de" stroke="#3c3c3c" stroke-width="1.2"/><path d="M2.2,4.5 L6.8,4.5 M4.5,2.2 L4.5,6.8" stroke="#000" stroke-width="1.2"/></svg>
<div style="position:absolute;left:35.40px;top:610px;font-size:11px;line-height:13px;letter-spacing:0.571px;transform:scaleX(1.0721);transform-origin:0 0;color:#474747;white-space:nowrap;">0000</div>
<div style="position:absolute;left:103.40px;top:610px;font-size:11px;line-height:13px;letter-spacing:0.507px;transform:scaleX(1.0808);transform-origin:0 0;color:#474747;white-space:nowrap;">0000-008</div>
<div style="position:absolute;left:621.40px;top:610px;font-size:11px;line-height:13px;letter-spacing:0.000px;transform:scaleX(1.1256);transform-origin:0 0;color:#474747;white-space:nowrap;"><span style="font-family:'Liberation Serif',serif;font-size:12px">I</span></div>
<div style="position:absolute;left:965.40px;top:610px;font-size:11px;line-height:13px;letter-spacing:0.488px;transform:scaleX(1.0905);transform-origin:0 0;color:#474747;white-space:nowrap;">7/13/2011 11:18 AM</div>
<svg style="position:absolute;left:14px;top:631px" width="9" height="9" viewBox="0 0 9 9"><rect x="0.6" y="0.6" width="7.8" height="7.8" rx="1.8" fill="#d4d9de" stroke="#3c3c3c" stroke-width="1.2"/><path d="M2.2,4.5 L6.8,4.5 M4.5,2.2 L4.5,6.8" stroke="#000" stroke-width="1.2"/></svg>
<div style="position:absolute;left:35.40px;top:630px;font-size:11px;line-height:13px;letter-spacing:0.571px;transform:scaleX(1.0721);transform-origin:0 0;color:#474747;white-space:nowrap;">0000</div>
<div style="position:absolute;left:103.40px;top:630px;font-size:11px;line-height:13px;letter-spacing:0.507px;transform:scaleX(1.0808);transform-origin:0 0;color:#474747;white-space:nowrap;">0000-009</div>
<div style="position:absolute;left:621.40px;top:630px;font-size:11px;line-height:13px;letter-spacing:0.000px;transform:scaleX(1.1256);transform-origin:0 0;color:#474747;white-space:nowrap;"><span style="font-family:'Liberation Serif',serif;font-size:12px">I</span></div>
<div style="position:absolute;left:703.40px;top:630px;font-size:11px;line-height:13px;letter-spacing:0.445px;transform:scaleX(1.0703);transform-origin:0 0;color:#474747;white-space:nowrap;">Oncology</div>
<div style="position:absolute;left:809.40px;top:630px;font-size:11px;line-height:13px;letter-spacing:0.536px;transform:scaleX(1.0813);transform-origin:0 0;color:#474747;white-space:nowrap;">211.3</div>
<div style="position:absolute;left:965.40px;top:630px;font-size:11px;line-height:13px;letter-spacing:0.466px;transform:scaleX(1.0863);transform-origin:0 0;color:#474747;white-space:nowrap;">7/14/2011 5:52 PM</div>
<div style="position:absolute;left:1024px;top:610px;width:66px;height:12px;background:rgba(255,255,255,0.5);"></div>
<div style="position:absolute;left:1154px;top:104px;width:3px;height:540px;background:#d4d4d2;"></div>
<div style="position:absolute;left:1157px;top:104px;width:1px;height:540px;background:#7a7a7a;"></div>
<div style="position:absolute;left:1158px;top:69px;width:2px;height:575px;background:#e8eef4;"></div>
<div style="position:absolute;left:0;top:0;width:1160px;height:646px;background:rgba(255,255,255,0.5);clip-path:polygon(0px 0px,1160px 0px,1154px 6px,6px 6px);"></div>
<div style="position:absolute;left:0;top:0;width:1160px;height:646px;background:rgba(255,255,255,0.3);clip-path:polygon(0px 0px,6px 6px,6px 640px,0px 646px);"></div>
<div style="position:absolute;left:6px;top:6px;width:1148px;height:1px;background:linear-gradient(to right,rgba(0,0,0,0) 0px,rgba(0,0,0,0) 250px,rgba(0,0,0,0.1) 800px);"></div>
<div style="position:absolute;left:0;top:0;width:1160px;height:646px;background:rgba(0,0,0,0.2);clip-path:polygon(1160px 0px,1160px 646px,1154px 640px,1154px 6px);"></div>
<div style="position:absolute;left:0;top:0;width:1160px;height:646px;background:rgba(0,0,0,0.48);clip-path:polygon(0px 646px,6px 640px,1154px 640px,1160px 646px);"></div>
<div style="position:absolute;left:0;top:0;width:1px;height:646px;background:#989898;"></div>
</body></html>
